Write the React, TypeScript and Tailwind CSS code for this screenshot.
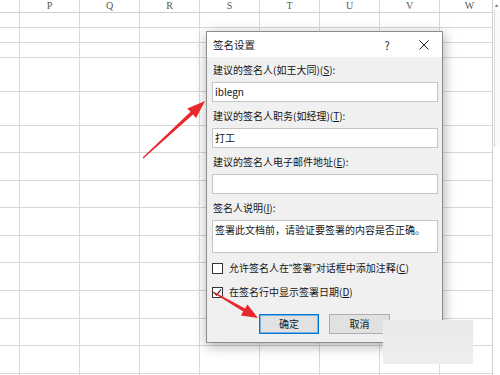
import React from "react";

const colW = [20, 60, 60, 60, 60, 60, 60, 60, 60];
const letters = ["", "P", "Q", "R", "S", "T", "U", "V", "W"];
const rowH = [15, 15, 15, 34, 34, 27, 28, 27, 28, 27, 28, 28, 27, 28, 28];

type Pt = [number, number];
function arrow(t: Pt, p: Pt, L: number, W: number, w0: number, w1: number) {
  const dx = p[0] - t[0];
  const dy = p[1] - t[1];
  const len = Math.hypot(dx, dy);
  const ux = dx / len;
  const uy = dy / len;
  const nx = -uy;
  const ny = ux;
  const bx = p[0] - ux * L;
  const by = p[1] - uy * L;
  const pts: Pt[] = [
    [t[0] + (nx * w0) / 2, t[1] + (ny * w0) / 2],
    [bx + (nx * w1) / 2, by + (ny * w1) / 2],
    [bx + nx * W, by + ny * W],
    p,
    [bx - nx * W, by - ny * W],
    [bx - (nx * w1) / 2, by - (ny * w1) / 2],
    [t[0] - (nx * w0) / 2, t[1] - (ny * w0) / 2],
  ];
  return pts.map((q) => `${q[0].toFixed(1)},${q[1].toFixed(1)}`).join(" ");
}

function Key({ k }: { k: string }) {
  return (
    <span>
      (<span className="underline underline-offset-1">{k}</span>)
    </span>
  );
}

function Label({ children }: { children: React.ReactNode }) {
  return <div className="ml-[1px] h-[14px] leading-[14px] whitespace-nowrap">{children}</div>;
}

function Input({ value, h = "h-[20px]" }: { value?: string; h?: string }) {
  return (
    <div className={`${h} w-[226px] border border-[#c4c4c4] bg-white px-[2px] leading-[18px] text-[#111] whitespace-nowrap`}>
      {value}
    </div>
  );
}

export default function App() {
  return (
    <div className="relative w-[500px] h-[375px] overflow-hidden bg-white font-['Noto_Sans_CJK_SC','Noto_Sans',sans-serif] text-[10px] text-[#161616]">
      {/* spreadsheet */}
      <div className="flex h-full">
        <div className="w-[493px] h-full overflow-hidden border-r border-[#cfcfcf]">
          <div className="flex h-[13px] border-b border-[#cfcfcf] w-[520px]">
            {colW.map((w, i) => (
              <div
                key={i}
                style={{ width: w }}
                className="shrink-0 border-r border-[#d6d6d6] text-center font-['Liberation_Serif',serif] text-[10px] leading-[11px] text-[#555]"
              >
                {letters[i]}
              </div>
            ))}
          </div>
          {rowH.map((h, r) => (
            <div key={r} style={{ height: h }} className="flex border-b border-[#d8d8d8] w-[520px]">
              {colW.map((w, i) => (
                <div key={i} style={{ width: w }} className="shrink-0 border-r border-[#dadada]" />
              ))}
            </div>
          ))}
        </div>
        <div className="w-[7px] h-full flex flex-col">
          <div className="h-[10px] text-[6px] leading-[10px] text-center text-[#777]">▴</div>
          <div className="h-[137px] ml-[1px] border-l border-[#d9d9d9] bg-[#fafafa]" />
          <div className="flex-1" />
        </div>
      </div>

      {/* dialog */}
      <div className="absolute left-[206px] top-[31px] w-[237px] h-[312px] border border-[#8c8c8c] bg-[#f0f0f0] shadow-[1px_3px_12px_rgba(0,0,0,0.32)] flex flex-col">
        <div className="h-[25px] bg-white flex items-center pl-[6px]">
          <div className="flex-1 leading-[14px] text-[10.5px]">签名设置</div>
          <div className="w-[36px] text-center text-[11px] leading-[14px] text-[#222]">?</div>
          <div className="w-[37px] flex items-center justify-center">
            <svg width="10" height="10" viewBox="0 0 10 10">
              <path d="M0.5 0.5 L9.5 9.5 M9.5 0.5 L0.5 9.5" stroke="#222" strokeWidth="1" />
            </svg>
          </div>
        </div>
        <div className="flex-1 flex flex-col pl-[5px] pr-[4px] pt-[6px]">
          <Label>
            建议的签名人(如王大同)<Key k="S" />:
          </Label>
          <div className="mt-[5px]">
            <Input value="iblegn" />
          </div>
          <div className="mt-[7px]">
            <Label>
              建议的签名人职务(如经理)<Key k="T" />:
            </Label>
          </div>
          <div className="mt-[5px]">
            <Input value="打工" />
          </div>
          <div className="mt-[7px]">
            <Label>
              建议的签名人电子邮件地址<Key k="E" />:
            </Label>
          </div>
          <div className="mt-[5px]">
            <Input />
          </div>
          <div className="mt-[7px]">
            <Label>
              签名人说明<Key k="I" />:
            </Label>
          </div>
          <div className="mt-[5px]">
            <div className="h-[33px] w-[226px] border border-[#c4c4c4] bg-white px-[2px] pt-[1px] leading-[16px] whitespace-nowrap">
              签署此文档前，请验证要签署的内容是否正确。
            </div>
          </div>
          <div className="mt-[8px] h-[14px] flex items-center gap-[6px]">
            <div className="w-[11px] h-[11px] border border-[#333] bg-white" />
            <div className="leading-[14px] whitespace-nowrap">
              允许签名人在<span className="font-['Liberation_Sans',sans-serif]">“</span>签署
              <span className="font-['Liberation_Sans',sans-serif]">”</span>对话框中添加注释<Key k="C" />
            </div>
          </div>
          <div className="mt-[10px] h-[14px] flex items-center gap-[6px]">
            <div className="w-[11px] h-[11px] border border-[#333] bg-white flex items-center justify-center">
              <svg width="9" height="9" viewBox="0 0 9 9">
                <path d="M1 4.6 L3.5 7.2 L8 1.5" stroke="#222" strokeWidth="1.2" fill="none" />
              </svg>
            </div>
            <div className="leading-[14px] whitespace-nowrap">
              在签名行中显示签署日期<Key k="D" />
            </div>
          </div>
          <div className="mt-[15px] flex justify-center gap-[10px] pr-[1px]">
            <div className="w-[60px] h-[20px] border border-[#0078d7] shadow-[inset_0_0_0_1px_rgba(0,120,215,0.45)] bg-[#e1e1e1] flex items-center justify-center leading-[14px]">
              确定
            </div>
            <div className="w-[61px] h-[20px] border border-[#adadad] bg-[#e1e1e1] flex items-center justify-center leading-[14px]">
              取消
            </div>
          </div>
        </div>
      </div>

      {/* overlay patch */}
      <div className="absolute left-[383px] top-[320px] w-[90px] h-[44px] bg-gradient-to-b from-[#e9e9e9] to-[#eeeeee]" />

      {/* arrows */}
      <svg className="absolute inset-0 pointer-events-none" width="500" height="375" viewBox="0 0 500 375">
        <polygon points={arrow([143, 158], [205, 101], 18, 6.5, 1.2, 3.8)} fill="#e8292b" />
        <polygon points={arrow([213, 292], [258, 318], 16, 6.5, 1.2, 3.8)} fill="#e8292b" />
      </svg>
    </div>
  );
}
